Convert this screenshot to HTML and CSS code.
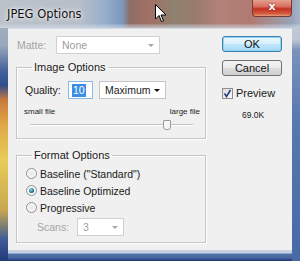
FILE: index.html
```html
<!DOCTYPE html>
<html><head><meta charset="utf-8"/>
<title>JPEG Options</title>
<link rel="stylesheet" href="styles.css">
</head>
<body>
<div class="win">
  <div class="titlebar">
    <span class="title">JPEG Options</span>
    <div class="close">x</div>
    <svg class="cursor" width="12" height="19" viewBox="0 0 12 19"><path d="M0.5 0.5 L0.5 15 L4 11.5 L6.5 17.5 L8.5 16.7 L6 11 L11 11 Z" fill="#fff" stroke="#000" stroke-width="1"/></svg>
  </div>
  <div class="client">
    <div class="left">
      <div class="matte">
        <label class="dim">Matte:</label>
        <div class="select matte-sel dimsel"><span>None</span><i class="arrow grey"></i></div>
      </div>

      <fieldset class="group imgopt">
        <legend>Image Options</legend>
        <div class="quality">
          <label>Quality:</label>
          <div class="qinput"><span class="sel">10</span></div>
          <div class="select qsel"><span>Maximum</span><i class="arrow"></i></div>
        </div>
        <div class="scale"><span>small file</span><span>large file</span></div>
        <div class="slider"><div class="track"></div><div class="thumb"></div></div>
      </fieldset>

      <fieldset class="group fmtopt">
        <legend>Format Options</legend>
        <div class="radio"><span class="rb"></span>Baseline (&quot;Standard&quot;)</div>
        <div class="radio"><span class="rb on"></span>Baseline Optimized</div>
        <div class="radio"><span class="rb"></span>Progressive</div>
        <div class="scans">
          <label class="dim">Scans:</label>
          <div class="select scans-sel dimsel"><span>3</span><i class="arrow grey"></i></div>
        </div>
      </fieldset>
    </div>

    <div class="right">
      <button class="btn default">OK</button>
      <button class="btn">Cancel</button>
      <div class="preview">
        <span class="chk"><svg width="9" height="9" viewBox="0 0 9 9"><path d="M1.5 4.5 L3.5 7.5 L7.5 1" fill="none" stroke="#2a3d7a" stroke-width="1.6"/></svg></span>
        Preview
      </div>
      <div class="size">69.0K</div>
    </div>
  </div>
</div>
</body>
</html>
```

FILE: styles.css
```css
body {
  margin: 0;
  font-family: "Liberation Sans", Arial, sans-serif;
  font-size: 10.5px;
  color: #1a1a1a;
}
.win {
  width: 300px;
  height: 261px;
  box-sizing: border-box;
  padding: 0 8px 11px 8px;
  display: flex;
  flex-direction: column;
  background:
    linear-gradient(#a8b4c4 0, #9aa8bc 45px, #46649c 70px, #2d4e8e 85px, #c87a3c 100px, #e0a848 125px, #e8cc58 160px, #c8a850 210px, #3c5a96 240px, #223a78 261px) left top / 8px 100% no-repeat,
    linear-gradient(#c8d0dc 0, #bcc6d4 40px, #7a92bc 50px, #5878b0 120px, #4a6aa6 250px) right top / 8px 100% no-repeat,
    linear-gradient(#c6d2e4 0, #c6d2e4 3px, #5272aa 4px, #4564a0 8px, #1e3470 11px) left bottom / 100% 11px no-repeat,
    #8aa0c0;
}
.titlebar {
  position: relative;
  height: 28px;
  margin: 0 -8px;
  padding: 0 8px;
  display: flex;
  align-items: flex-start;
  background: linear-gradient(90deg, #bcc2ca 0, #b6bec8 80px, #98aecb 105px, #7c98be 122px, #8e6e66 130px, #a27064 150px, #8e8270 175px, #9a7a6c 195px, #b2827a 220px, #b07a70 250px, #98a4b8 292px, #a8b4c8 300px);
}
.titlebar::after {
  content: "";
  position: absolute;
  left: 0; right: 0; bottom: 0;
  height: 4px;
  background: linear-gradient(rgba(200,210,225,0.2), rgba(210,220,232,0.7));
}
.title {
  margin-top: 7px;
  margin-left: -1px;
  font-family: "DejaVu Sans", sans-serif;
  font-size: 11.5px;
  color: #111;
  text-shadow: 0 0 6px rgba(255,255,255,0.9), 0 0 3px rgba(255,255,255,0.9);
}
.close {
  margin-left: auto;
  width: 40px;
  height: 17px;
  box-sizing: border-box;
  border: 1px solid #7a3a34;
  border-top: 0;
  border-radius: 0 0 4px 4px;
  background: linear-gradient(#e4a090 0, #d87060 40%, #c43020 55%, #d45a40 85%, #e89a7c 100%);
  color: #fff;
  font-family: "DejaVu Sans", sans-serif;
  font-weight: bold;
  font-size: 11px;
  line-height: 14px;
  text-align: center;
  text-shadow: 0 0 2px #600;
}
.cursor {
  position: absolute;
  left: 155px;
  top: 4px;
}
.client {
  flex: 1;
  display: flex;
  background: #f0f0f0;
  border-top: 1px solid #d6dce6;
  padding: 7px 0 0 8px;
}
.left {
  width: 190px;
  display: flex;
  flex-direction: column;
}
.dim {
  color: #a4a4a4;
}
.matte {
  display: flex;
  align-items: center;
  height: 18px;
}
.matte label {
  width: 39px;
  margin-left: 1px;
}
.select {
  position: relative;
  box-sizing: border-box;
  height: 18px;
  background: #fff;
  border: 1px solid #c4c4c4;
  display: flex;
  align-items: center;
  padding-left: 5px;
}
.dimsel {
  border-color: #d0d0d0;
  color: #9c9c9c;
}
.matte-sel {
  width: 104px;
}
.arrow {
  position: absolute;
  right: 5px;
  top: 7px;
  width: 0;
  height: 0;
  border-left: 3px solid transparent;
  border-right: 3px solid transparent;
  border-top: 3px solid #111;
}
.arrow.grey {
  border-top-color: #a8a8a8;
}
.group {
  margin: 0;
  padding: 0 0 0 8px;
  box-sizing: border-box;
  border: 1px solid #c6c6c6;
  box-shadow: inset 1px 1px 0 #fff, 1px 1px 0 #fff;
}
.group legend {
  padding: 0 2px;
  margin-left: 7px;
  line-height: 14px;
  font-size: 11px;
}
.imgopt {
  margin-top: 6px;
  height: 79px;
}
.quality {
  display: flex;
  align-items: center;
  margin-top: 7px;
  height: 18px;
}
.quality label {
  width: 43px;
}
.qinput {
  box-sizing: border-box;
  width: 25px;
  height: 18px;
  background: #fff;
  border: 1px solid #8cb8e6;
  display: flex;
  align-items: center;
  padding-left: 3px;
}
.sel {
  background: #3a8ee6;
  color: #fff;
  padding: 0 1px;
  line-height: 13px;
}
.qsel {
  margin-left: 6px;
  width: 67px;
}
.scale {
  display: flex;
  justify-content: space-between;
  margin: 8px 5px 0 -1px;
  font-size: 8px;
  color: #222;
}
.slider {
  position: relative;
  margin: 4px 12px 0 5px;
  height: 9px;
}
.track {
  position: absolute;
  left: 0; right: 0; top: 4px;
  height: 1px;
  background: #c4c4c4;
  border-bottom: 1px solid #fff;
}
.thumb {
  position: absolute;
  left: 133px;
  top: 0;
  width: 6px;
  height: 8px;
  background: #f6f6f6;
  border: 1px solid #9a9a9a;
  border-radius: 1px 1px 3px 3px;
}
.fmtopt {
  margin-top: 9px;
  height: 95px;
}
.radio {
  display: flex;
  align-items: center;
  height: 17px;
  margin-left: 1px;
  font-size: 10.5px;
}
.radio:first-of-type {
  margin-top: 3px;
}
.rb {
  width: 9px;
  height: 9px;
  border-radius: 50%;
  border: 1px solid #8e8f8f;
  background: radial-gradient(circle, #e6e6e6 0, #f8f8f8 70%);
  margin-right: 3px;
  display: flex;
  align-items: center;
  justify-content: center;
}
.rb.on::after {
  content: "";
  width: 5px;
  height: 5px;
  border-radius: 50%;
  background: radial-gradient(circle at 40% 35%, #8ce0f8 0, #1d6a8a 60%, #0d4a66 100%);
}
.scans {
  display: flex;
  align-items: center;
  margin-top: 2px;
  margin-left: 12px;
  height: 18px;
}
.scans label {
  width: 40px;
}
.scans-sel {
  width: 47px;
}
.right {
  margin-left: 16px;
  width: 62px;
  display: flex;
  flex-direction: column;
  align-items: flex-start;
}
.btn {
  width: 60px;
  height: 16px;
  box-sizing: border-box;
  font-family: "Liberation Sans", Arial, sans-serif;
  font-size: 11px;
  color: #111;
  padding: 0;
  border: 1px solid #707070;
  border-radius: 3px;
  background: linear-gradient(#f2f2f2 0, #ebebeb 50%, #dddddd 51%, #cfcfcf 100%);
  margin-bottom: 8px;
}
.default {
  border-color: #3c7fb1;
  background: linear-gradient(#eaf6fd 0, #d9f0fc 50%, #bee6fd 51%, #a7d9f5 100%);
  box-shadow: 0 0 0 1px #8ed4f4 inset;
}
.preview {
  display: flex;
  align-items: center;
  margin-top: 3px;
  font-size: 11px;
}
.chk {
  box-sizing: border-box;
  width: 11px;
  height: 11px;
  border: 1px solid #8e8f8f;
  background: linear-gradient(135deg, #dcdcdc, #fafafa);
  margin-right: 3px;
  display: flex;
  align-items: center;
  justify-content: center;
}
.size {
  margin-top: 11px;
  margin-left: 20px;
  font-size: 8.5px;
}
```
